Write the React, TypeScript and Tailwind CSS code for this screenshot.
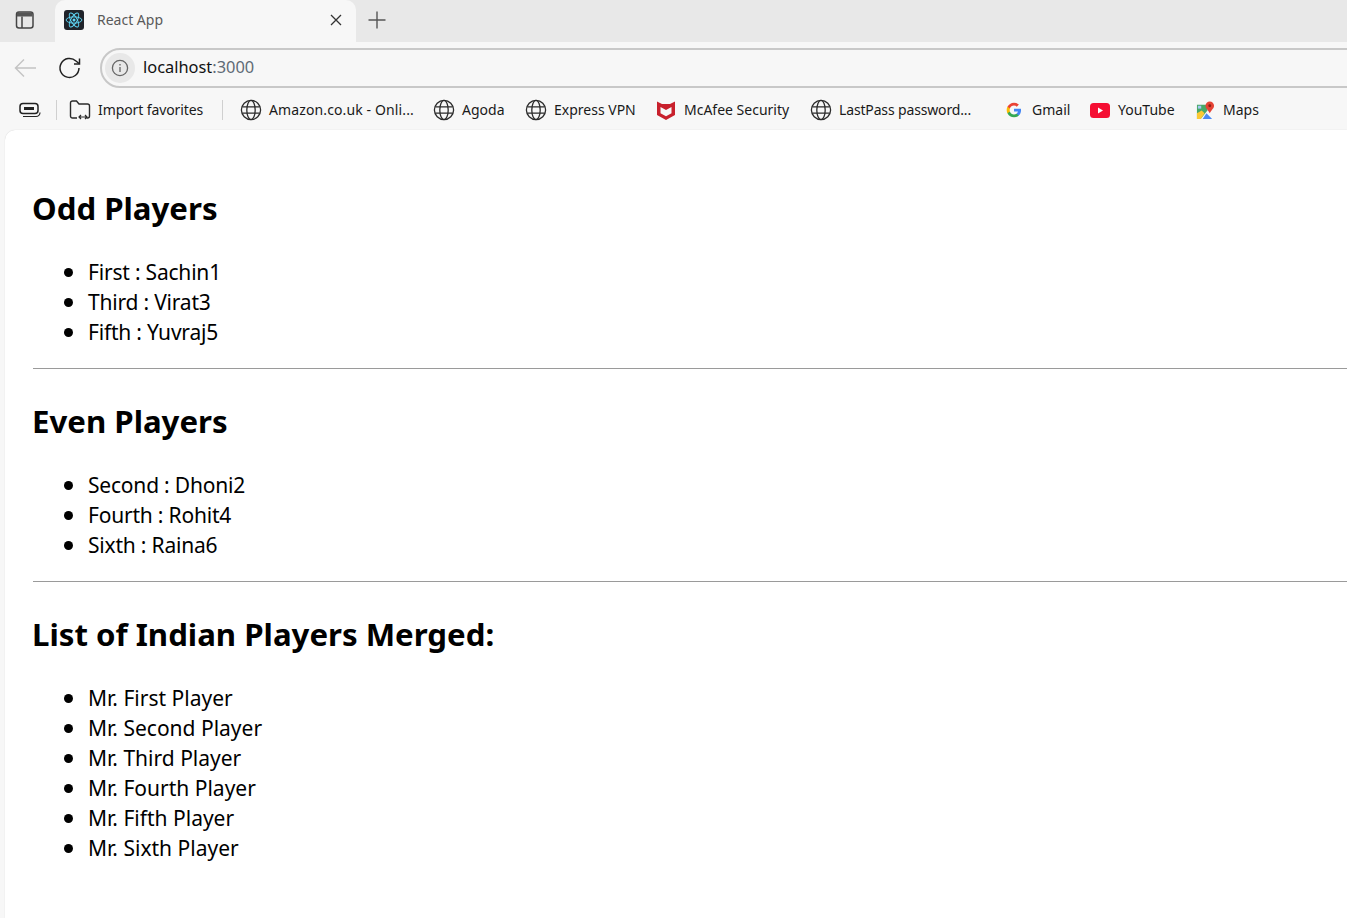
import React from "react";

const Globe = () => (
  <svg width="22" height="22" viewBox="0 0 22 22" fill="none" stroke="#2b2b2b" strokeWidth="1.3" className="shrink-0">
    <circle cx="11" cy="11" r="9.6" />
    <ellipse cx="11" cy="11" rx="4.2" ry="9.6" />
    <path d="M2.2 7.800h17.600M2.200 14.200h17.600" />
  </svg>
);

const ReactIcon = () => (
  <div className="w-5 h-5 rounded-[3px] bg-[#20232a] flex items-center justify-center shrink-0">
    <svg width="18" height="18" viewBox="-12 -12 24 24" fill="none" stroke="#61dafb" strokeWidth="1.2">
      <circle r="2" fill="#61dafb" stroke="none" />
      <ellipse rx="10.5" ry="4.2" />
      <ellipse rx="10.5" ry="4.2" transform="rotate(60)" />
      <ellipse rx="10.5" ry="4.2" transform="rotate(120)" />
    </svg>
  </div>
);

const McAfee = () => (
  <svg width="18" height="20" viewBox="0 0 18 20" className="shrink-0">
    <path fill="#c8202c" d="M0 1.500 5 4h8l5-2.500V15l-9 5-9-5Zm3.500 5.500v6.200L9 16.200l5.500-3V7L9 10Z" />
  </svg>
);

const GoogleG = () => (
  <svg width="16" height="16" viewBox="0 0 48 48" className="shrink-0">
    <path fill="#4285F4" d="M45.100 24.500c0-1.600-.1-3.100-.4-4.500H24v8.500h11.800c-.5 2.800-2 5.100-4.300 6.700v5.500h7c4.200-3.800 6.600-9.500 6.600-16.200z" />
    <path fill="#34A853" d="M24 46c5.900 0 10.900-2 14.500-5.300l-7-5.500c-2 1.300-4.500 2.100-7.500 2.100-5.700 0-10.600-3.900-12.300-9.100H4.400v5.600C8 40.900 15.400 46 24 46z" />
    <path fill="#FBBC05" d="M11.700 28.200c-.4-1.300-.7-2.700-.7-4.200s.3-2.900.7-4.200v-5.600H4.400C2.900 17.200 2 20.500 2 24s.9 6.800 2.400 9.800z" />
    <path fill="#EA4335" d="M24 10.700c3.200 0 6.100 1.100 8.400 3.300l6.300-6.300C34.900 4.100 29.900 2 24 2 15.400 2 8 7.100 4.400 14.200l7.300 5.600c1.700-5.200 6.600-9.100 12.300-9.100z" />
  </svg>
);

const YouTube = () => (
  <svg width="20" height="15" viewBox="0 0 20 15" className="shrink-0">
    <rect width="20" height="15" rx="3.500" fill="#f50f33" />
    <path d="M8 4.500v6l5-3Z" fill="#fff" />
  </svg>
);

const Maps = () => (
  <svg width="19" height="19" viewBox="0 0 20 20" className="shrink-0">
    <path fill="#48a868" d="M1 4h11v6l-7 9H1Z" />
    <path fill="#fcc934" d="M1 19V13l5-3 3 3-4 6Z" />
    <path fill="#4a89f3" d="m7 19 4-6 6 6Z" />
    <path fill="#a6c6f5" d="M2 5h3.500v3H2Z" />
    <path fill="#e54335" d="M14.500 0.500a4.500 4.500 0 0 1 4.500 4.500c0 3-3 4.500-4.500 8-1.500-3.500-4.500-5-4.500-8a4.500 4.500 0 0 1 4.500-4.500Z" />
    <circle cx="14.500" cy="5" r="1.500" fill="#8a1f15" />
  </svg>
);

const Bookmark = ({ icon, label, className, textClass }: { icon: React.ReactNode; label: string; className: string; textClass: string }) => (
  <div className={`flex items-center shrink-0 ${className}`}>
    {icon}
    <span className={`-mt-px text-[14px] text-[#1a1a1a] whitespace-nowrap ${textClass}`}>{label}</span>
  </div>
);

const PlayerSection = ({ title, items, last, tight }: { title: string; items: string[]; last?: boolean; tight?: boolean }) => (
  <section>
    <h2 className="text-[31.2px] font-bold leading-[44px] text-black -ml-px -mt-px">{title}</h2>
    <ul
      className={`list-none pl-[55px] mt-[27px] text-[21px] leading-[30px] text-black ${
        tight ? "tracking-[-0.2px]" : "tracking-normal"
      }`}
    >
      {items.map((item) => (
        <li
          key={item}
          className="relative before:absolute before:left-[-24px] before:top-[10.5px] before:w-[9px] before:h-[9px] before:rounded-full before:bg-black"
        >
          {item}
        </li>
      ))}
    </ul>
    {!last && <hr className="border-0 border-t border-[#9a9a9a] mt-[21px] mb-[31px]" />}
  </section>
);

export default function App() {
  return (
    <div className="w-[1347px] h-[918px] overflow-hidden bg-[#f7f7f7] flex flex-col font-['Noto_Sans','Open_Sans',sans-serif]">
      {/* Tab strip */}
      <div className="h-[42px] shrink-0 bg-[#e8e8e8] flex items-end">
        <div className="w-[55px] h-[42px] flex items-center justify-center pr-[5px] pb-[3px]">
          <svg width="20" height="20" viewBox="0 0 20 20" fill="none" stroke="#444" strokeWidth="1.500">
            <rect x="1.500" y="2" width="16.500" height="16" rx="2.500" />
            <path d="M7 6.500V18" />
            <path d="M2 2.500h15.500v4H2Z" fill="#555" stroke="none" />
          </svg>
        </div>
        <div className="w-[301px] h-[42px] bg-[#f7f7f7] rounded-t-[10px] flex items-center pl-[9px] pr-[13px] pb-[3px]">
          <ReactIcon />
          <span className="ml-[13px] text-[14px] text-[#5a5a5a]">React App</span>
          <svg width="14" height="14" viewBox="0 0 14 14" className="ml-auto" stroke="#333" strokeWidth="1.300">
            <path d="M2 2l10 10M12 2 2 12" />
          </svg>
        </div>
        <div className="h-[42px] flex items-center ml-[11px] pb-[3px]">
          <svg width="20" height="20" viewBox="0 0 20 20" stroke="#555" strokeWidth="1.400">
            <path d="M10 1.500v17M1.500 10h17" />
          </svg>
        </div>
      </div>
      {/* Address row */}
      <div className="h-[48px] shrink-0 flex items-center pt-[4px]">
        <svg width="24" height="24" viewBox="0 0 24 24" className="ml-[13px] -mt-px" fill="none" stroke="#c4c4c4" strokeWidth="1.500">
          <path d="M23 12H2.500M11 3.500 2.500 12l8.500 8.500" />
        </svg>
        <svg width="24" height="24" viewBox="0 0 24 24" className="ml-[21px] -mt-px" fill="none" stroke="#222" strokeWidth="1.500">
          <path d="M21 12a9.500 9.500 0 1 1-3-7l3 2.500" />
          <path d="M21.500 2.500v5.500H16" />
        </svg>
        <div className="ml-[18px] flex-1 h-[40px] -mr-[30px] rounded-full border-2 border-[#c8c8c8] flex items-center pl-[3px]">
          <div className="w-[30px] h-[30px] rounded-full bg-[#e8e8e8] flex items-center justify-center">
            <svg width="18" height="18" viewBox="0 0 18 18" fill="none" stroke="#666" strokeWidth="1.300">
              <circle cx="9" cy="9" r="7.600" />
              <path d="M9 8v5M9 5v1.400" />
            </svg>
          </div>
          <span className="ml-[8px] -mt-px text-[16.4px] text-[#111]">
            localhost<span className="text-[#5f6b76]">:3000</span>
          </span>
        </div>
      </div>
      {/* Bookmarks */}
      <div className="h-[40px] shrink-0 flex items-center">
        <svg width="22" height="16" viewBox="0 0 22 16" className="ml-[19px]" fill="none" stroke="#222" strokeWidth="1.500">
          <rect x="1" y="1.500" width="18" height="10" rx="3" />
          <path d="M5 6.500h10" strokeWidth="3" />
          <path d="M4 14.500h13a4 4 0 0 0 4-4" strokeWidth="1.200" />
        </svg>
        <div className="ml-[15px] w-px h-5 bg-[#d0d0d0]" />
        <div className="ml-[12px] flex items-center">
          <svg width="22" height="22" viewBox="0 0 22 22" fill="none" stroke="#2b2b2b" strokeWidth="1.400">
            <path d="M8 19H3.500A2 2 0 0 1 1.500 17V4a2 2 0 0 1 2-2h4l2.500 3h8.500a2 2 0 0 1 2 2v10a2 2 0 0 1-2 2h-1" />
            <path d="M10 18h8M12 16l-2 2 2 2M16 16l2 2-2 2" strokeWidth="1.200" />
          </svg>
          <span className="ml-[7px] -mt-px w-[106px] text-[14px] tracking-[-0.1px] text-[#1a1a1a] whitespace-nowrap">Import favorites</span>
        </div>
        <div className="ml-[18px] w-px h-5 bg-[#d0d0d0]" />
        <Bookmark className="ml-[17px] gap-[7px]" textClass="w-[145px] tracking-[0.12px]" icon={<Globe />} label="Amazon.co.uk - Onli..." />
        <Bookmark className="ml-[19px] gap-[7px]" textClass="w-[43px]" icon={<Globe />} label="Agoda" />
        <Bookmark className="ml-[20px] gap-[7px]" textClass="w-[82px]" icon={<Globe />} label="Express VPN" />
        <Bookmark className="ml-[21px] gap-[9px]" textClass="w-[107px]" icon={<McAfee />} label="McAfee Security" />
        <Bookmark className="ml-[19px] gap-[7px]" textClass="w-[132px] tracking-[-0.15px]" icon={<Globe />} label="LastPass password..." />
        <Bookmark className="ml-[35px] gap-[10px]" textClass="w-[37px]" icon={<GoogleG />} label="Gmail" />
        <Bookmark className="ml-[21px] gap-[8px]" textClass="w-[57px]" icon={<YouTube />} label="YouTube" />
        <Bookmark className="ml-[21px] gap-[8px]" textClass="w-[36px]" icon={<Maps />} label="Maps" />
      </div>
      {/* Page */}
      <main className="flex-1 ml-[5px] bg-white rounded-tl-[10px] pl-[28px] pt-[57px] shadow-[0_0_1px_rgba(0,0,0,0.2)]">
        <PlayerSection tight title="Odd Players" items={["First : Sachin1", "Third : Virat3", "Fifth : Yuvraj5"]} />
        <PlayerSection tight title="Even Players" items={["Second : Dhoni2", "Fourth : Rohit4", "Sixth : Raina6"]} />
        <PlayerSection
          last
          title="List of Indian Players Merged:"
          items={["Mr. First Player", "Mr. Second Player", "Mr. Third Player", "Mr. Fourth Player", "Mr. Fifth Player", "Mr. Sixth Player"]}
        />
      </main>
    </div>
  );
}
